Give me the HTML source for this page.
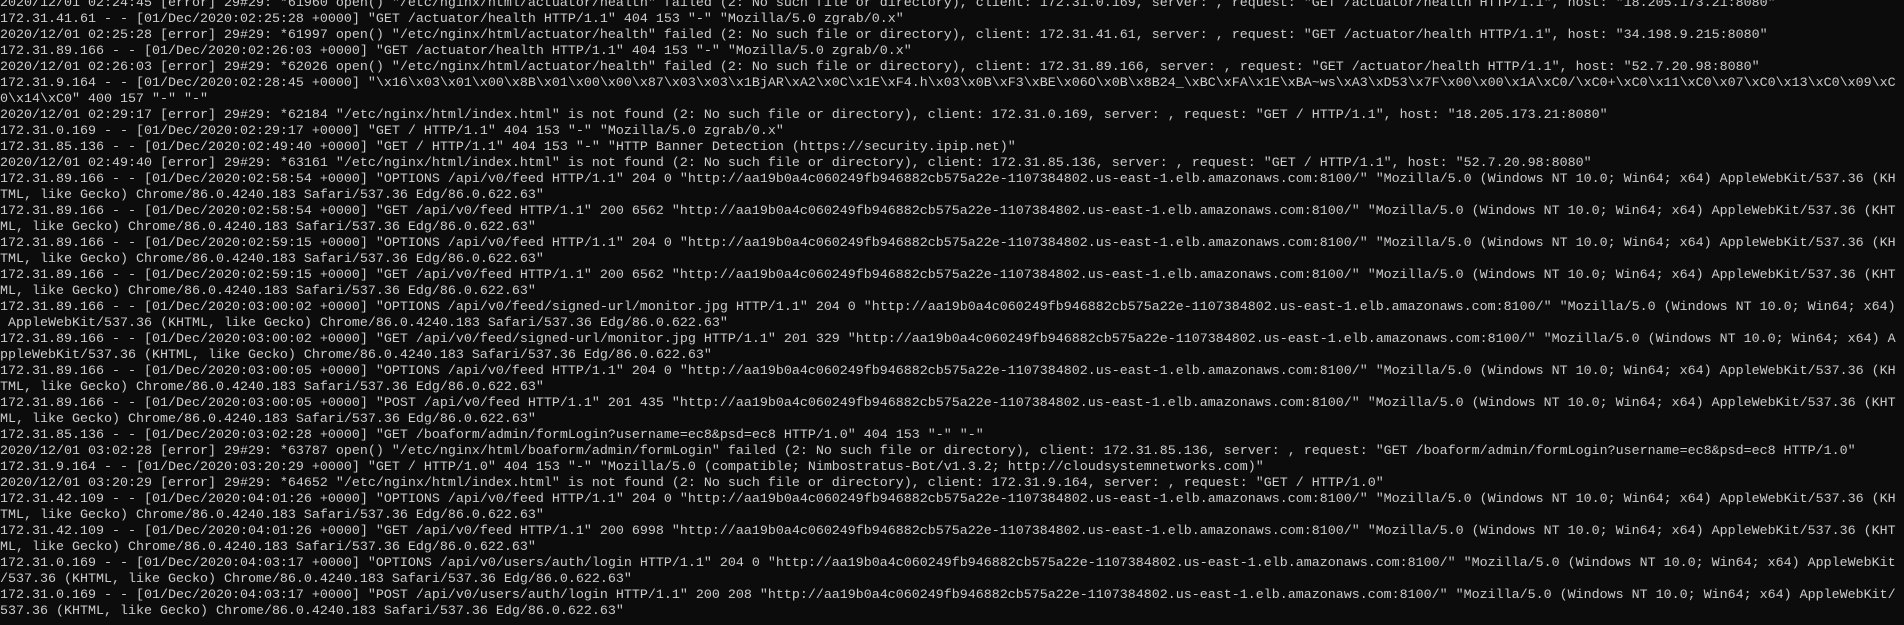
<!DOCTYPE html>
<html><head><meta charset="utf-8"><style>
html,body{margin:0;padding:0;background:#0c0c0c;width:1904px;height:625px;overflow:hidden}
pre{margin:0;position:absolute;top:-4px;left:0;font-family:"Liberation Mono",monospace;font-size:13.33px;line-height:16px;color:#cccccc;white-space:pre}
</style></head><body><pre>2020/12/01 02:24:45 [error] 29#29: *61960 open() "/etc/nginx/html/actuator/health" failed (2: No such file or directory), client: 172.31.0.169, server: , request: "GET /actuator/health HTTP/1.1", host: "18.205.173.21:8080"
172.31.41.61 - - [01/Dec/2020:02:25:28 +0000] "GET /actuator/health HTTP/1.1" 404 153 "-" "Mozilla/5.0 zgrab/0.x"
2020/12/01 02:25:28 [error] 29#29: *61997 open() "/etc/nginx/html/actuator/health" failed (2: No such file or directory), client: 172.31.41.61, server: , request: "GET /actuator/health HTTP/1.1", host: "34.198.9.215:8080"
172.31.89.166 - - [01/Dec/2020:02:26:03 +0000] "GET /actuator/health HTTP/1.1" 404 153 "-" "Mozilla/5.0 zgrab/0.x"
2020/12/01 02:26:03 [error] 29#29: *62026 open() "/etc/nginx/html/actuator/health" failed (2: No such file or directory), client: 172.31.89.166, server: , request: "GET /actuator/health HTTP/1.1", host: "52.7.20.98:8080"
172.31.9.164 - - [01/Dec/2020:02:28:45 +0000] "\x16\x03\x01\x00\x8B\x01\x00\x00\x87\x03\x03\x1BjAR\xA2\x0C\x1E\xF4.h\x03\x0B\xF3\xBE\x06O\x0B\x8B24_\xBC\xFA\x1E\xBA~ws\xA3\xD53\x7F\x00\x00\x1A\xC0/\xC0+\xC0\x11\xC0\x07\xC0\x13\xC0\x09\xC
0\x14\xC0" 400 157 "-" "-"
2020/12/01 02:29:17 [error] 29#29: *62184 "/etc/nginx/html/index.html" is not found (2: No such file or directory), client: 172.31.0.169, server: , request: "GET / HTTP/1.1", host: "18.205.173.21:8080"
172.31.0.169 - - [01/Dec/2020:02:29:17 +0000] "GET / HTTP/1.1" 404 153 "-" "Mozilla/5.0 zgrab/0.x"
172.31.85.136 - - [01/Dec/2020:02:49:40 +0000] "GET / HTTP/1.1" 404 153 "-" "HTTP Banner Detection (https://security.ipip.net)"
2020/12/01 02:49:40 [error] 29#29: *63161 "/etc/nginx/html/index.html" is not found (2: No such file or directory), client: 172.31.85.136, server: , request: "GET / HTTP/1.1", host: "52.7.20.98:8080"
172.31.89.166 - - [01/Dec/2020:02:58:54 +0000] "OPTIONS /api/v0/feed HTTP/1.1" 204 0 "http://aa19b0a4c060249fb946882cb575a22e-1107384802.us-east-1.elb.amazonaws.com:8100/" "Mozilla/5.0 (Windows NT 10.0; Win64; x64) AppleWebKit/537.36 (KH
TML, like Gecko) Chrome/86.0.4240.183 Safari/537.36 Edg/86.0.622.63"
172.31.89.166 - - [01/Dec/2020:02:58:54 +0000] "GET /api/v0/feed HTTP/1.1" 200 6562 "http://aa19b0a4c060249fb946882cb575a22e-1107384802.us-east-1.elb.amazonaws.com:8100/" "Mozilla/5.0 (Windows NT 10.0; Win64; x64) AppleWebKit/537.36 (KHT
ML, like Gecko) Chrome/86.0.4240.183 Safari/537.36 Edg/86.0.622.63"
172.31.89.166 - - [01/Dec/2020:02:59:15 +0000] "OPTIONS /api/v0/feed HTTP/1.1" 204 0 "http://aa19b0a4c060249fb946882cb575a22e-1107384802.us-east-1.elb.amazonaws.com:8100/" "Mozilla/5.0 (Windows NT 10.0; Win64; x64) AppleWebKit/537.36 (KH
TML, like Gecko) Chrome/86.0.4240.183 Safari/537.36 Edg/86.0.622.63"
172.31.89.166 - - [01/Dec/2020:02:59:15 +0000] "GET /api/v0/feed HTTP/1.1" 200 6562 "http://aa19b0a4c060249fb946882cb575a22e-1107384802.us-east-1.elb.amazonaws.com:8100/" "Mozilla/5.0 (Windows NT 10.0; Win64; x64) AppleWebKit/537.36 (KHT
ML, like Gecko) Chrome/86.0.4240.183 Safari/537.36 Edg/86.0.622.63"
172.31.89.166 - - [01/Dec/2020:03:00:02 +0000] "OPTIONS /api/v0/feed/signed-url/monitor.jpg HTTP/1.1" 204 0 "http://aa19b0a4c060249fb946882cb575a22e-1107384802.us-east-1.elb.amazonaws.com:8100/" "Mozilla/5.0 (Windows NT 10.0; Win64; x64)
 AppleWebKit/537.36 (KHTML, like Gecko) Chrome/86.0.4240.183 Safari/537.36 Edg/86.0.622.63"
172.31.89.166 - - [01/Dec/2020:03:00:02 +0000] "GET /api/v0/feed/signed-url/monitor.jpg HTTP/1.1" 201 329 "http://aa19b0a4c060249fb946882cb575a22e-1107384802.us-east-1.elb.amazonaws.com:8100/" "Mozilla/5.0 (Windows NT 10.0; Win64; x64) A
ppleWebKit/537.36 (KHTML, like Gecko) Chrome/86.0.4240.183 Safari/537.36 Edg/86.0.622.63"
172.31.89.166 - - [01/Dec/2020:03:00:05 +0000] "OPTIONS /api/v0/feed HTTP/1.1" 204 0 "http://aa19b0a4c060249fb946882cb575a22e-1107384802.us-east-1.elb.amazonaws.com:8100/" "Mozilla/5.0 (Windows NT 10.0; Win64; x64) AppleWebKit/537.36 (KH
TML, like Gecko) Chrome/86.0.4240.183 Safari/537.36 Edg/86.0.622.63"
172.31.89.166 - - [01/Dec/2020:03:00:05 +0000] "POST /api/v0/feed HTTP/1.1" 201 435 "http://aa19b0a4c060249fb946882cb575a22e-1107384802.us-east-1.elb.amazonaws.com:8100/" "Mozilla/5.0 (Windows NT 10.0; Win64; x64) AppleWebKit/537.36 (KHT
ML, like Gecko) Chrome/86.0.4240.183 Safari/537.36 Edg/86.0.622.63"
172.31.85.136 - - [01/Dec/2020:03:02:28 +0000] "GET /boaform/admin/formLogin?username=ec8&amp;psd=ec8 HTTP/1.0" 404 153 "-" "-"
2020/12/01 03:02:28 [error] 29#29: *63787 open() "/etc/nginx/html/boaform/admin/formLogin" failed (2: No such file or directory), client: 172.31.85.136, server: , request: "GET /boaform/admin/formLogin?username=ec8&amp;psd=ec8 HTTP/1.0"
172.31.9.164 - - [01/Dec/2020:03:20:29 +0000] "GET / HTTP/1.0" 404 153 "-" "Mozilla/5.0 (compatible; Nimbostratus-Bot/v1.3.2; http://cloudsystemnetworks.com)"
2020/12/01 03:20:29 [error] 29#29: *64652 "/etc/nginx/html/index.html" is not found (2: No such file or directory), client: 172.31.9.164, server: , request: "GET / HTTP/1.0"
172.31.42.109 - - [01/Dec/2020:04:01:26 +0000] "OPTIONS /api/v0/feed HTTP/1.1" 204 0 "http://aa19b0a4c060249fb946882cb575a22e-1107384802.us-east-1.elb.amazonaws.com:8100/" "Mozilla/5.0 (Windows NT 10.0; Win64; x64) AppleWebKit/537.36 (KH
TML, like Gecko) Chrome/86.0.4240.183 Safari/537.36 Edg/86.0.622.63"
172.31.42.109 - - [01/Dec/2020:04:01:26 +0000] "GET /api/v0/feed HTTP/1.1" 200 6998 "http://aa19b0a4c060249fb946882cb575a22e-1107384802.us-east-1.elb.amazonaws.com:8100/" "Mozilla/5.0 (Windows NT 10.0; Win64; x64) AppleWebKit/537.36 (KHT
ML, like Gecko) Chrome/86.0.4240.183 Safari/537.36 Edg/86.0.622.63"
172.31.0.169 - - [01/Dec/2020:04:03:17 +0000] "OPTIONS /api/v0/users/auth/login HTTP/1.1" 204 0 "http://aa19b0a4c060249fb946882cb575a22e-1107384802.us-east-1.elb.amazonaws.com:8100/" "Mozilla/5.0 (Windows NT 10.0; Win64; x64) AppleWebKit
/537.36 (KHTML, like Gecko) Chrome/86.0.4240.183 Safari/537.36 Edg/86.0.622.63"
172.31.0.169 - - [01/Dec/2020:04:03:17 +0000] "POST /api/v0/users/auth/login HTTP/1.1" 200 208 "http://aa19b0a4c060249fb946882cb575a22e-1107384802.us-east-1.elb.amazonaws.com:8100/" "Mozilla/5.0 (Windows NT 10.0; Win64; x64) AppleWebKit/
537.36 (KHTML, like Gecko) Chrome/86.0.4240.183 Safari/537.36 Edg/86.0.622.63"</pre></body></html>
